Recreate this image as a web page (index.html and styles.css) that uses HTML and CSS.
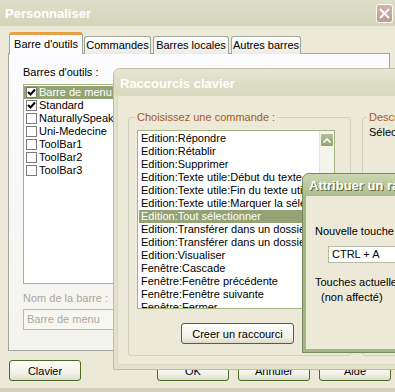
FILE: index.html
```html
<!DOCTYPE html>
<html lang="fr">
<head>
  <meta charset="UTF-8" />
  <title>Personnaliser</title>
  <link rel="stylesheet" href="styles.css">
</head>
<body>

<div class="win-main">
  <div class="titlebar-main">
    <span class="title">Personnaliser</span>
    <span class="close">
      <svg width="11" height="11" viewBox="0 0 11 11"><path d="M1 1 L10 10 M10 1 L1 10" stroke="#fff" stroke-width="2" fill="none"/></svg>
    </span>
  </div>
  <div class="main-body">
    <div class="tabs">
      <div class="tab active">Barre d'outils</div>
      <div class="tab t-cmd">Commandes</div>
      <div class="tab t-loc">Barres locales</div>
      <div class="tab t-aut">Autres barres</div>
    </div>
    <div class="panel">
      <div class="lbl">Barres d'outils :</div>
      <div class="checklist">
        <div class="row sel"><span class="cb"><svg width="9" height="9" viewBox="0 0 9 9"><path d="M1 4 L3.5 6.5 L8 1.5" stroke="#000" stroke-width="2" fill="none"/></svg></span>Barre de menu</div>
        <div class="row"><span class="cb"><svg width="9" height="9" viewBox="0 0 9 9"><path d="M1 4 L3.5 6.5 L8 1.5" stroke="#000" stroke-width="2" fill="none"/></svg></span>Standard</div>
        <div class="row"><span class="cb"></span>NaturallySpeaking</div>
        <div class="row"><span class="cb"></span>Uni-Medecine</div>
        <div class="row"><span class="cb"></span>ToolBar1</div>
        <div class="row"><span class="cb"></span>ToolBar2</div>
        <div class="row"><span class="cb"></span>ToolBar3</div>
      </div>
      <div class="lbl dis name-lbl">Nom de la barre :</div>
      <div class="textbox dis">Barre de menu</div>
    </div>
    <div class="buttons">
      <button class="btn">Clavier</button>
      <span class="spacer"></span>
      <button class="btn">OK</button>
      <button class="btn">Annuler</button>
      <button class="btn">Aide</button>
    </div>
  </div>
</div>

<div class="win2">
  <div class="titlebar2">Raccourcis clavier</div>
  <div class="body2">
    <fieldset class="group g-cmd">
      <legend>Choisissez une commande :</legend>
      <div class="cmdlist">
        <div class="items">
          <div class="item">Edition:Répondre</div>
          <div class="item">Edition:Rétablir</div>
          <div class="item">Edition:Supprimer</div>
          <div class="item">Edition:Texte utile:Début du texte</div>
          <div class="item">Edition:Texte utile:Fin du texte utile</div>
          <div class="item">Edition:Texte utile:Marquer la sélection</div>
          <div class="item sel">Edition:Tout sélectionner</div>
          <div class="item">Edition:Transférer dans un dossier</div>
          <div class="item">Edition:Transférer dans un dossier</div>
          <div class="item">Edition:Visualiser</div>
          <div class="item">Fenêtre:Cascade</div>
          <div class="item">Fenêtre:Fenêtre précédente</div>
          <div class="item">Fenêtre:Fenêtre suivante</div>
          <div class="item">Fenêtre:Fermer</div>
        </div>
        <div class="scrollbar">
          <span class="sb-up">
            <svg width="8" height="5" viewBox="0 0 8 5"><path d="M0.5 4.5 L4 1 L7.5 4.5" stroke="#fff" stroke-width="1.6" fill="none"/></svg>
          </span>
        </div>
      </div>
      <button class="btn btn-create">Creer un raccourci</button>
    </fieldset>
    <fieldset class="group g-desc">
      <legend>Description</legend>
      <div class="desc">Sélectionnez une commande</div>
    </fieldset>
  </div>
</div>

<div class="win3">
  <div class="titlebar3">Attribuer un raccourci</div>
  <div class="body3">
    <div class="txt">Nouvelle touche de raccourci :</div>
    <div class="keybox">CTRL + A</div>
    <div class="txt cur">Touches actuelles :</div>
    <div class="txt none">(non affecté)</div>
  </div>
</div>

</body>
</html>
```

FILE: styles.css
```css
* {
  box-sizing: border-box;
}
html, body {
  margin: 0;
  width: 395px;
  height: 392px;
  overflow: hidden;
}
body {
  font-family: "Liberation Sans", Arial, sans-serif;
  font-size: 11px;
  line-height: 13px;
  color: #000;
  background: #ece9d8;
  position: relative;
}

/* main window */
.win-main {
  width: 395px;
  height: 392px;
  background: #ece9d8;
  border-bottom: 4px solid #d2d1b8;
  display: flex;
  flex-direction: column;
}
.titlebar-main {
  height: 26px;
  flex-shrink: 0;
  background: linear-gradient(#dfdfca, #d3d4b8);
  display: flex;
  align-items: center;
  padding: 0 2px 0 5px;
}
.title {
  flex: 1;
  color: #fff;
  font-weight: bold;
  font-size: 13px;
}
.close {
  width: 17px;
  height: 19px;
  border: 1px solid #fff;
  border-radius: 3px;
  background: linear-gradient(#d2b2ac, #c09a93);
  display: flex;
  align-items: center;
  justify-content: center;
}
.main-body {
  flex: 1;
  padding: 6px 4px 0 8px;
}
.tabs {
  height: 21px;
  display: flex;
  align-items: flex-end;
}
.tab {
  height: 18px;
  margin-bottom: -1px;
  border: 1px solid #9fa69a;
  border-bottom: none;
  border-radius: 3px 3px 0 0;
  background: linear-gradient(#fefefe, #ecebe4);
  display: flex;
  align-items: center;
  justify-content: center;
  white-space: nowrap;
  position: relative;
}
.tab.active {
  height: 22px;
  width: 74px;
  margin-left: 1px;
  background: #fcfcfe;
  border-top: 3px solid #e8a045;
  z-index: 1;
}
.t-cmd { width: 67px; margin-left: 1px; }
.t-loc { width: 76px; margin-left: 2px; }
.t-aut { width: 70px; margin-left: 2px; }

.panel {
  width: 382px;
  height: 298px;
  border: 1px solid #9fa69a;
  background: linear-gradient(#fcfcfe, #f4f3ee);
  padding: 12px 0 0 14px;
}
.lbl {
  white-space: nowrap;
}
.dis {
  color: #aca899;
}
.checklist {
  width: 150px;
  height: 200px;
  margin-top: 5px;
  border: 1px solid #a4b583;
  background: #fff;
  padding-top: 1px;
}
.row {
  height: 13px;
  display: flex;
  align-items: center;
  gap: 2px;
  padding-left: 2px;
  white-space: nowrap;
}
.row.sel {
  background: #94a373;
  color: #fff;
}
.cb {
  width: 11px;
  height: 11px;
  border: 1px solid #7a7a7a;
  background: #fff;
  display: flex;
  align-items: center;
  justify-content: center;
}
.name-lbl {
  margin-top: 8px;
}
.textbox {
  width: 150px;
  height: 21px;
  margin-top: 4px;
  border: 1px solid #b4c1a0;
  background: #f7f7f2;
  padding: 3px 3px;
}

.buttons {
  display: flex;
  gap: 9px;
  margin-top: 9px;
  padding-left: 1px;
}
.spacer {
  flex: 1;
}
.btn {
  width: 72px;
  height: 21px;
  flex-shrink: 0;
  font-family: "Liberation Sans", Arial, sans-serif;
  font-size: 11px;
  color: #000;
  border: 1px solid #4b6a24;
  border-radius: 3px;
  background: linear-gradient(#fdfdfa, #f1f0e8 70%, #dcdac8);
  padding: 0;
  white-space: nowrap;
}

/* keyboard shortcuts dialog */
.win2 {
  position: absolute;
  left: 113px;
  top: 68px;
  width: 300px;
  height: 302px;
  background: #e2e1cb;
  border: 1px solid #bfbea4;
  border-radius: 7px 7px 0 0;
  display: flex;
  flex-direction: column;
}
.titlebar2 {
  height: 26px;
  flex-shrink: 0;
  border-radius: 6px 6px 0 0;
  background: linear-gradient(#e6e6d3, #d7d8bd);
  color: #fff;
  font-weight: bold;
  font-size: 13px;
  display: flex;
  align-items: center;
  padding: 3px 0 0 6px;
}
.body2 {
  flex: 1;
  margin: 0 3px 4px;
  background: #ece9d8;
  border: 1px solid #d9d8c4;
  display: flex;
  align-items: flex-start;
  padding: 14px 0 0 10px;
  overflow: hidden;
}
.group {
  margin: 0;
  flex-shrink: 0;
  border: 1px solid #d0d0bf;
  border-radius: 3px;
  min-width: 0;
}
.group legend {
  padding: 0 2px;
  margin-left: -2px;
  line-height: 14px;
  color: #a95b17;
  white-space: nowrap;
}
.g-cmd {
  width: 223px;
  height: 246px;
  padding: 6px 0 0 8px;
}
.cmdlist {
  width: 198px;
  height: 179px;
  border: 1px solid #a4b583;
  background: #fff;
  display: flex;
  overflow: hidden;
}
.items {
  flex: 1;
  min-width: 0;
  padding: 1px 0 0 1px;
}
.item {
  height: 13px;
  padding-left: 2px;
  white-space: nowrap;
  overflow: hidden;
}
.item.sel {
  background: #94a373;
  color: #fff;
}
.scrollbar {
  width: 15px;
  flex-shrink: 0;
  background: #f4f4ed;
  border-left: 1px solid #e6e6de;
  padding: 2px 0 0 0;
}
.sb-up {
  width: 14px;
  height: 14px;
  border: 1px solid #f2f4ea;
  border-radius: 2px;
  background: linear-gradient(#b3c095, #95a46e);
  display: flex;
  align-items: center;
  justify-content: center;
}
.btn-create {
  display: block;
  width: 113px;
  margin: 14px 0 0 44px;
}
.g-desc {
  width: 200px;
  height: 246px;
  margin-left: 11px;
  padding: 2px 0 0 6px;
}
.desc {
  white-space: nowrap;
}

/* assign shortcut dialog */
.win3 {
  position: absolute;
  left: 302px;
  top: 173px;
  width: 110px;
  height: 180px;
  background: #a5b682;
  border: 1px solid #77885a;
  border-radius: 7px 7px 0 0;
  display: flex;
  flex-direction: column;
}
.titlebar3 {
  height: 22px;
  flex-shrink: 0;
  border-radius: 6px 6px 0 0;
  background: linear-gradient(#cbd6b1, #aebd8b);
  color: #fff;
  font-weight: bold;
  font-size: 13px;
  text-shadow: 1px 1px 0 #56663a;
  white-space: nowrap;
  overflow: hidden;
  display: flex;
  align-items: center;
  padding: 1px 0 0 6px;
}
.body3 {
  flex: 1;
  margin: 0 3px 3px;
  background: #ece9d8;
  padding: 29px 0 0 9px;
}
.txt {
  white-space: nowrap;
}
.keybox {
  width: 120px;
  height: 17px;
  margin: 8px 0 0 13px;
  border: 1px solid #b4bca6;
  background: #fff;
  padding: 1px 3px;
  white-space: nowrap;
}
.cur {
  margin-top: 13px;
}
.none {
  margin-top: 2px;
  padding-left: 6px;
}
```
